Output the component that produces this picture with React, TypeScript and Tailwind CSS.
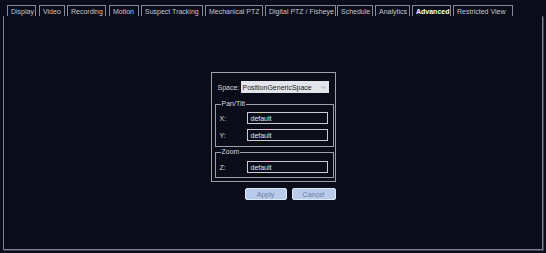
import { ChevronDown } from 'lucide-react'

const tabs = [
  { label: 'Display', w: 'w-[29px]', ml: 'ml-0' },
  { label: 'Video', w: 'w-[26px]', ml: 'ml-[3px]' },
  { label: 'Recording', w: 'w-[39px]', ml: 'ml-[2px]' },
  { label: 'Motion', w: 'w-[30px]', ml: 'ml-[3px]' },
  { label: 'Suspect Tracking', w: 'w-[62px]', ml: 'ml-[2px]' },
  { label: 'Mechanical PTZ', w: 'w-[58px]', ml: 'ml-[2px]' },
  { label: 'Digital PTZ / Fisheye', w: 'w-[71px]', ml: 'ml-[2px]' },
  { label: 'Schedule', w: 'w-[36px]', ml: 'ml-[1px]' },
  { label: 'Analytics', w: 'w-[35px]', ml: 'ml-[2px]' },
  { label: 'Advanced', w: 'w-[39px]', ml: 'ml-[2px]', active: true },
  { label: 'Restricted View', w: 'w-[60px]', ml: 'ml-[2px]' },
]

function TextRow({ label, value }: { label: string; value: string }) {
  return (
    <div className="flex items-center h-[12px]">
      <span className="w-[27px] text-[#d4d7de]">{label}</span>
      <div className="w-[81px] h-[12px] border border-[#c9ccd4] bg-[#0b0e1a] px-[3px] flex items-center text-[#e2e4ea]">
        {value}
      </div>
    </div>
  )
}

export default function App() {
  return (
    <div className="w-[546px] h-[253px] bg-[#0a0d19] font-['Liberation_Sans',sans-serif] text-[7px] leading-none overflow-hidden">
      {/* tab strip */}
      <div className="flex pl-[7px] pt-[5px] h-[16px]">
        {tabs.map((t) => (
          <div
            key={t.label}
            className={`${t.w} ${t.ml} h-[11px] border border-b-0 border-[#858a97] px-[3px] flex items-center whitespace-nowrap ${
              t.active ? 'text-white font-bold' : 'text-[#c3c7cf]'
            }`}
          >
            {t.label}
          </div>
        ))}
      </div>

      {/* content panel */}
      <div className="mx-[3px] h-[234px] border border-t-0 border-[#7c818e] shadow-[1px_1px_0_#3d4250] flex justify-center pt-[56px]">
        <div className="flex flex-col w-[125px]">
          <div className="border border-[#9da1ab] px-[3px] pt-[8px] pb-[3px]">
            <div className="flex items-center h-[12px] pl-[3px]">
              <span className="w-[23px] text-[#d4d7de]">Space:</span>
              <div className="w-[88px] h-[12px] bg-[#e4e5ea] flex items-center justify-between pl-[2px] pr-[2px] text-[#1a1c22]">
                <span>PositionGenericSpace</span>
                <ChevronDown size={7} strokeWidth={1.5} className="text-[#555a66]" />
              </div>
            </div>

            <fieldset className="mt-[6px] border border-[#9da1ab] pl-[4px] pr-[5px] pt-[3px] pb-[5px]">
              <legend className="ml-[1px] px-[1px] h-[10px] leading-[10px] text-[#d4d7de]">Pan/Tilt</legend>
              <div className="flex flex-col gap-[5px]">
                <TextRow label="X:" value="default" />
                <TextRow label="Y:" value="default" />
              </div>
            </fieldset>

            <fieldset className="mt-[0px] border border-[#9da1ab] pl-[4px] pr-[5px] pt-[4px] pb-[4px]">
              <legend className="ml-[1px] px-[1px] h-[10px] leading-[10px] text-[#d4d7de]">Zoom</legend>
              <TextRow label="Z:" value="default" />
            </fieldset>
          </div>

          <div className="flex justify-end gap-[5px] mt-[6px]">
            <button className="w-[42px] h-[12px] rounded-[2px] border border-[#dce6f6] bg-[#b8cbea] text-[#6f81a2] text-[7px] leading-none">
              Apply
            </button>
            <button className="w-[44px] h-[12px] rounded-[2px] border border-[#dce6f6] bg-[#b8cbea] text-[#6f81a2] text-[7px] leading-none">
              Cancel
            </button>
          </div>
        </div>
      </div>
    </div>
  )
}
